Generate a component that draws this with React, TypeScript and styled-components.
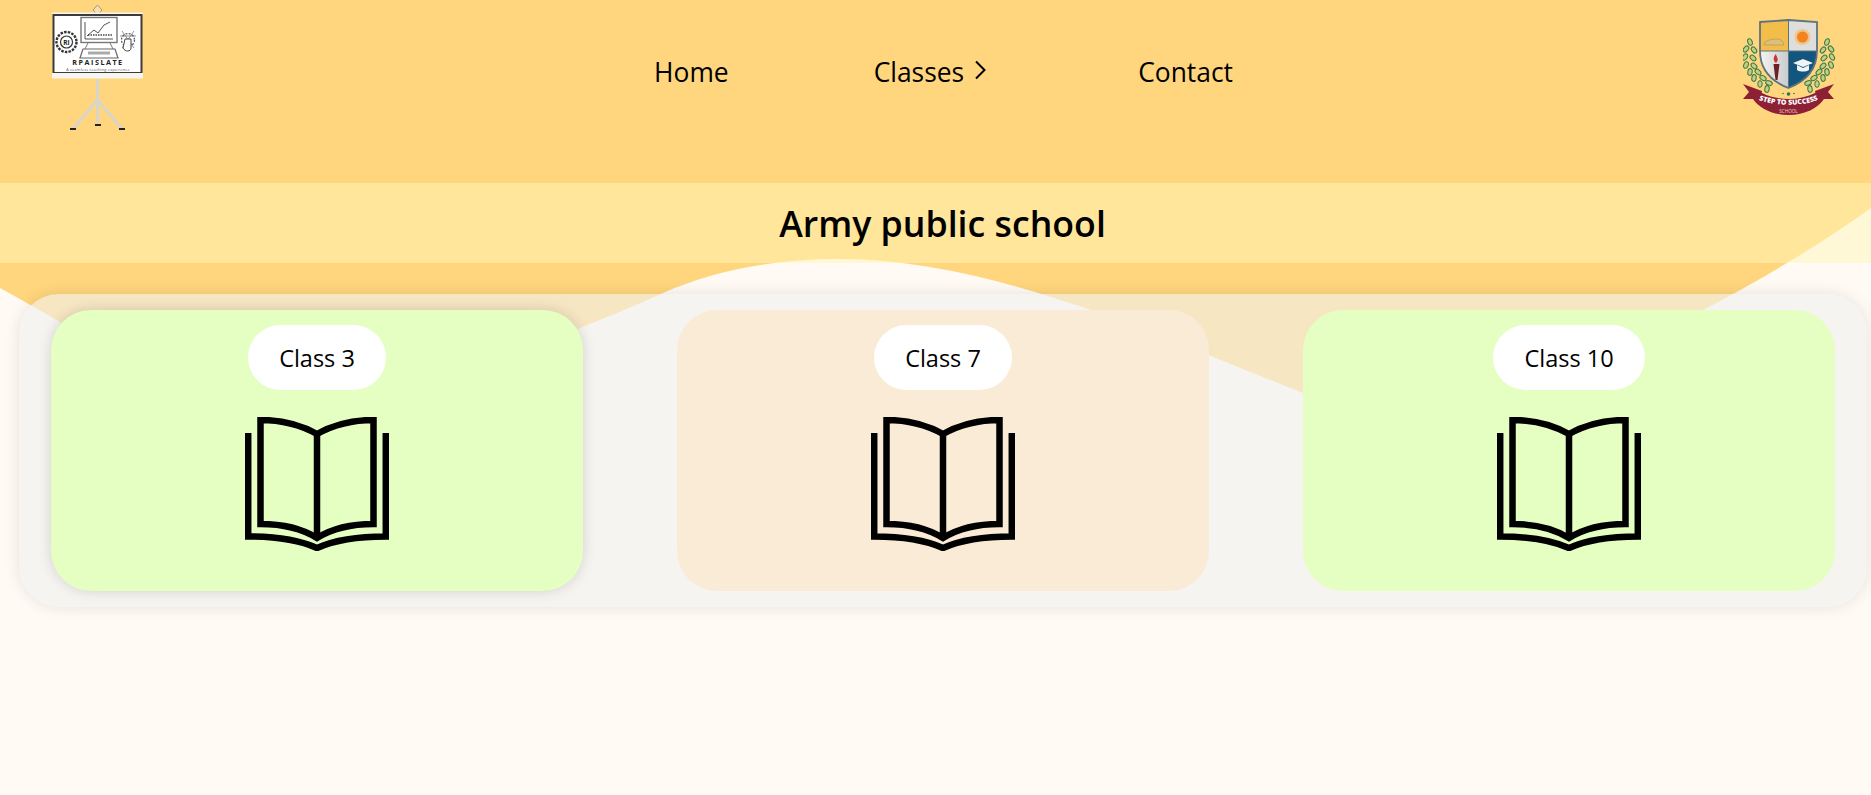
import React, { FunctionComponent } from 'react';
import styled, { createGlobalStyle } from 'styled-components';

const GlobalStyle = createGlobalStyle`
  html, body {
    margin: 0;
    padding: 0;
    height: 100%;
    background: #fffaf3;
    font-family: 'Open Sans', 'Noto Sans', sans-serif;
    color: #000;
  }
`;

const Page = styled.div`
  position: relative;
  width: 100%;
  height: 795px;
  overflow: hidden;
`;
const Wave = styled.svg`
  position: absolute;
  top: 0;
  left: 0;
  width: 1871px;
  height: 460px;
`;
const Content = styled.div`
  position: relative;
`;
const Header = styled.header`
  display: flex;
  justify-content: space-between;
  align-items: flex-start;
  height: 183px;
  padding: 0 31px 0 52px;
`;
const LeftLogo = styled.svg`
  width: 92px;
  height: 126px;
  margin-top: 4px;
`;
const RightLogo = styled.svg`
  width: 97px;
  height: 105px;
  margin-top: 15px;
`;
const Nav = styled.nav`
  display: flex;
  gap: 145px;
  margin-top: 53px;
  font-size: 26.4px;
  line-height: 38px;
`;
const NavItem = styled.a`
  display: flex;
  align-items: center;
`;
const Chevron = styled.svg`
  width: 12px;
  height: 20px;
  margin: -5px 7px 0 10px;
`;
const TitleBand = styled.div`
  height: 80px;
  padding-left: 14px;
  background: rgba(255, 246, 186, 0.5);
  display: flex;
  align-items: center;
  justify-content: center;
`;
const Title = styled.h1`
  margin: 0;
  font-size: 35.7px;
  font-weight: 600;
`;
const Panel = styled.section`
  display: flex;
  justify-content: space-between;
  margin: 31px 4px 0 19px;
  padding: 16px 32px;
  border-radius: 40px;
  background: rgba(240, 240, 240, 0.6);
  box-shadow: 0 0 15px rgba(0, 0, 0, 0.1);
`;
const Card = styled.div<{ $tone: string; $raised?: boolean }>`
  width: 532px;
  height: 281px;
  padding-top: 15px;
  box-sizing: border-box;
  border-radius: 40px;
  background: ${(p) => p.$tone};
  box-shadow: ${(p) => (p.$raised ? '0 0 14px rgba(0, 0, 0, 0.14)' : 'none')};
  display: flex;
  flex-direction: column;
  align-items: center;
`;
const Pill = styled.div`
  height: 65px;
  padding: 0 31px;
  border-radius: 32.5px;
  background: #fff;
  font-size: 23.5px;
  line-height: 67px;
`;
const Book = styled.svg`
  width: 144px;
  height: 134px;
  margin-top: 27px;
`;

const classes = [
  { name: 'Class 3', tone: '#e4ffc1', raised: true },
  { name: 'Class 7', tone: '#faebd7' },
  { name: 'Class 10', tone: '#e4ffc1' },
];

const BookIcon: FunctionComponent = () => (
  <Book viewBox="0 0 144 134" fill="none" stroke="#000" strokeWidth="6.5">
    <path d="M72 17C56 8 35 3 15.5 3V107C35 107 56 111 72 121C88 111 109 107 128.5 107V3C109 3 88 8 72 17Z" />
    <path d="M72 16V122" />
    <path d="M3.2 16V119.5C28 119.5 52 122 72 131C92 122 116 119.5 140.8 119.5V16" />
  </Book>
);

const EaselLogo: FunctionComponent = () => (
  <LeftLogo viewBox="0 0 92 126">
    <path d="M45.5 1L50 6L45.5 11L41 6Z" fill="#f5dfae" stroke="#a89a80" />
    <path d="M45.5 74V119M45.5 96L21 125M45.5 96L70 125" stroke="#d8d5cd" strokeWidth="3" fill="none" />
    <rect x="18" y="124" width="6" height="2" fill="#222" />
    <rect x="43" y="120" width="6" height="2" fill="#222" />
    <rect x="67" y="124" width="6" height="2" fill="#222" />
    <rect x="0" y="8.5" width="91" height="2.5" fill="#f7f5f0" />
    <rect x="1.5" y="11" width="88" height="58" fill="#fff" stroke="#3b3b3b" strokeWidth="2" />
    <rect x="0" y="69" width="91" height="5.5" fill="#f7f5f0" />
    <rect x="29" y="13.5" width="36" height="25" fill="#fff" stroke="#777" strokeWidth="1.4" />
    <path d="M33 18V35H61M35 32L42 26L46 29L52 21L58 18" fill="none" stroke="#555" strokeWidth="1" />
    <path d="M36 31H60" stroke="#444" strokeWidth="1.5" strokeDasharray="1.5 1" />
    <path d="M36 39L33 45M58 39L61 45" stroke="#777" strokeWidth="1" />
    <path d="M31 45H63L66 54H28Z" fill="#fff" stroke="#666" strokeWidth="1.2" />
    <path d="M36 49H58" stroke="#aaa" strokeWidth="3" />
    <circle cx="14.5" cy="38" r="10" fill="none" stroke="#333" strokeWidth="2.4" strokeDasharray="2.5 1.2" />
    <circle cx="14.5" cy="38" r="6" fill="#fff" stroke="#333" strokeWidth="1.2" />
    <text x="14.5" y="40.5" fontSize="6.5" fontWeight="700" textAnchor="middle" fill="#222">RI</text>
    <circle cx="76" cy="36" r="6.5" fill="none" stroke="#555" strokeWidth="1.2" strokeDasharray="2 1.4" />
    <path d="M68 32H84M70 27L82 44M82 27L70 44" stroke="#666" strokeWidth="0.7" />
    <path d="M73 35H79V44C79 48 73 48 71 44Z" fill="#fff" stroke="#444" strokeWidth="1" />
    <text x="46" y="61" fontSize="7.2" fontWeight="700" letterSpacing="1.5" textAnchor="middle" fill="#222">RPAISLATE</text>
    <text x="46" y="66.5" fontSize="3.9" letterSpacing="0.2" textAnchor="middle" fill="#555">A seamless teaching experience</text>
  </LeftLogo>
);

const leafSpots = [
  [15, 27, -20], [11, 34, 40], [19, 35, -40], [10, 42, 30], [18, 43, -50], [11, 50, 20], [19, 51, -50],
  [15, 57, 10], [23, 57, -50], [19, 63, 10], [28, 63, -60], [25, 69, 0], [34, 68, -70], [32, 74, 10],
];

const SchoolLogo: FunctionComponent = () => (
  <RightLogo viewBox="8 0 97 105">
    <defs>
      <linearGradient id="torchQuarter" x1="0" y1="0" x2="1" y2="0">
        <stop offset="0" stopColor="#f4f3f0" />
        <stop offset="1" stopColor="#c9cccd" />
      </linearGradient>
      <path id="ribbonArc" d="M20 83C36 92 71 92 87 83" />
    </defs>
    {leafSpots.map(([x, y, r]) => (
      <React.Fragment key={`${x}-${y}`}>
        <ellipse cx={x} cy={y} rx="2.2" ry="3.4" fill="#c6cf80" stroke="#35794a" strokeWidth="1" transform={`rotate(${r} ${x} ${y})`} />
        <ellipse cx={107 - x} cy={y} rx="2.2" ry="3.4" fill="#c6cf80" stroke="#35794a" strokeWidth="1" transform={`rotate(${-r} ${107 - x} ${y})`} />
      </React.Fragment>
    ))}
    <path d="M25 7L53.5 5V36H25Z" fill="#f3bd4a" />
    <path d="M53.5 5L82 7V36H53.5Z" fill="#dedfdc" />
    <path d="M25 36H53.5V73C38 67 25 56 25 36Z" fill="url(#torchQuarter)" />
    <path d="M53.5 36H82C82 56 69 67 53.5 73Z" fill="#12557e" />
    <path d="M25 7L53.5 5L82 7V36C82 56 69 67 53.5 73C38 67 25 56 25 36Z" fill="none" stroke="#5f7380" strokeWidth="1.8" />
    <path d="M53.5 5V73M25 36H82" stroke="#5f7380" strokeWidth="1" />
    <path d="M30 27C36 23 46 23 48 27L49 30H29Z" fill="#dcc07a" stroke="#a89060" strokeWidth="0.6" />
    <circle cx="67.5" cy="22" r="8" fill="#f2c48d" />
    <circle cx="67.5" cy="22" r="5.5" fill="#f2841f" />
    <path d="M38.5 49H44.5L42.5 65H40.5Z" fill="#6b2226" />
    <path d="M41 48C37 45 39 41 41 39C41 42 45 44 41 48Z" fill="#c8323a" />
    <path d="M58 48L68 44L78 48L68 52Z" fill="#f1f4f4" />
    <path d="M62 50V55C65 57 71 57 74 55V50L68 53Z" fill="#f1f4f4" />
    <path d="M8 69L27 76L25 88L19 84L8 84L14 77Z" fill="#8e2035" />
    <path d="M99 69L80 76L82 88L88 84L99 84L93 77Z" fill="#8e2035" />
    <path d="M18 84C21 79 24 78 27 78C44 86 63 86 80 78C83 78 86 79 89 84C83 93 70 100 53.5 100C37 100 24 93 18 84Z" fill="#8e2035" />
    <circle cx="53.5" cy="79" r="1.8" fill="#1f7a4d" />
    <circle cx="48" cy="78.5" r="0.8" fill="#1f7a4d" />
    <circle cx="59" cy="78.5" r="0.8" fill="#1f7a4d" />
    <text fontSize="7" fontWeight="800" textAnchor="middle" fill="#fff">
      <textPath href="#ribbonArc" startOffset="50%">STEP TO SUCCESS</textPath>
    </text>
    <text x="53.5" y="97.5" fontSize="4.6" textAnchor="middle" fill="#f3d8c9">SCHOOL</text>
  </RightLogo>
);

export default function App() {
  return (
    <Page>
      <GlobalStyle />
      <Wave viewBox="0 0 1871 460">
        <path
          d="M0 0H1871V208C1815 248 1760 280 1703 310C1600 365 1403 431 1303 393C1180 345 1000 259 840 259C770 259 710 272 663 293C630 308 600 320 580 328C480 370 300 400 180 375C130 360 90 340 60 322C40 310 20 299 0 288Z"
          fill="#ffd67d"
        />
      </Wave>
      <Content>
        <Header>
          <EaselLogo />
          <Nav>
            <NavItem>Home</NavItem>
            <NavItem>
              Classes
              <Chevron viewBox="0 0 12 20" fill="none" stroke="#000" strokeWidth="2">
                <path d="M2 1.5L10.5 10L2 18.5" />
              </Chevron>
            </NavItem>
            <NavItem>Contact</NavItem>
          </Nav>
          <SchoolLogo />
        </Header>
        <TitleBand>
          <Title>Army public school</Title>
        </TitleBand>
        <Panel>
          {classes.map((c) => (
            <Card key={c.name} $tone={c.tone} $raised={c.raised}>
              <Pill>{c.name}</Pill>
              <BookIcon />
            </Card>
          ))}
        </Panel>
      </Content>
    </Page>
  );
}
